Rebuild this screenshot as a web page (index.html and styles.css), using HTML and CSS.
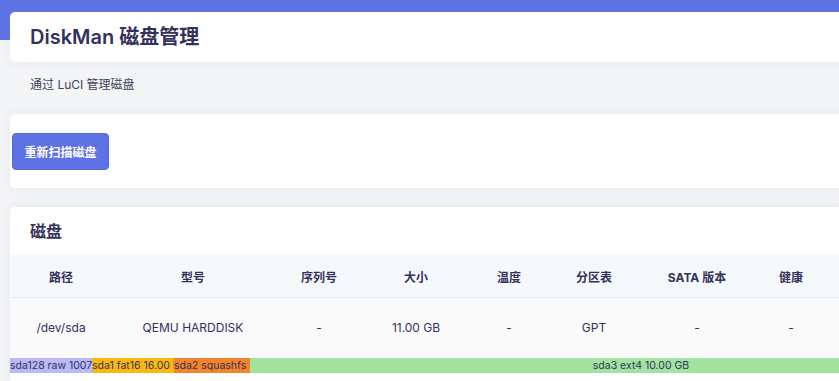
FILE: index.html
```html
<!DOCTYPE html>
<html>
<head>
    <meta charset="UTF-8">
    <title>DiskMan 磁盘管理</title>
    <link rel="stylesheet" href="styles.css">
</head>
<body>
    <div class="main">
        <h2 class="card map-title">DiskMan 磁盘管理</h2>
        <div class="map-descr">通过 LuCI 管理磁盘</div>

        <div class="card actions">
            <button type="button" class="btn-rescan">重新扫描磁盘</button>
        </div>

        <div class="card disks">
            <h3 class="section-title">磁盘</h3>
            <table class="disk-table">
                <colgroup>
                    <col class="c-path">
                    <col class="c-model">
                    <col class="c-serial">
                    <col class="c-size">
                    <col class="c-temp">
                    <col class="c-ptable">
                    <col class="c-sata">
                    <col class="c-health">
                    <col class="c-rest">
                </colgroup>
                <tr class="head">
                    <th>路径</th>
                    <th>型号</th>
                    <th>序列号</th>
                    <th>大小</th>
                    <th>温度</th>
                    <th>分区表</th>
                    <th>SATA 版本</th>
                    <th>健康</th>
                    <th></th>
                </tr>
                <tr class="row">
                    <td>/dev/sda</td>
                    <td>QEMU HARDDISK</td>
                    <td>-</td>
                    <td>11.00 GB</td>
                    <td>-</td>
                    <td>GPT</td>
                    <td>-</td>
                    <td>-</td>
                    <td></td>
                </tr>
            </table>
            <div class="part-bar">
                <div class="part p-raw">sda128 raw 1007.00 KB</div>
                <div class="part p-fat">sda1 fat16 16.00 MB</div>
                <div class="part p-squash">sda2 squashfs 104.00 MB</div>
                <div class="part p-ext">sda3 ext4 10.00 GB</div>
            </div>
        </div>
    </div>
</body>
</html>
```

FILE: styles.css
```css
html, body {
    overflow: hidden;
}
body {
    margin: 0;
    background: linear-gradient(#5e72e4 0, #5e72e4 40px, #f4f5f7 40px);
    font-family: Inter, "Noto Sans CJK SC", sans-serif;
    color: #32325d;
}
.main {
    width: 1022px;
    padding: 12px 0 0 10px;
}
.card {
    background-color: #FFFFFF;
    border-radius: 5px;
    box-shadow: 0 0 12px rgba(136, 152, 170, 0.15);
}
.map-title {
    margin: 0;
    height: 50px;
    line-height: 50px;
    padding-left: 20px;
    font-size: 20px;
    font-weight: 600;
    color: #32325d;
}
.map-descr {
    padding: 14px 20px 20px;
    line-height: 18px;
    font-size: 12px;
    color: #3c4257;
}
.actions {
    padding: 19px 2px 18px;
}
.btn-rescan {
    display: block;
    height: 37px;
    width: 97px;
    padding: 0;
    background-color: #5e72e4;
    border: 1px solid #5468dc;
    border-radius: 4px;
    color: #FFFFFF;
    font-family: Inter, "Noto Sans CJK SC", sans-serif;
    font-size: 12px;
    font-weight: 600;
}
.disks {
    margin-top: 19px;
    padding-bottom: 10px;
}
.section-title {
    margin: 0;
    height: 48px;
    line-height: 48px;
    padding-left: 20px;
    font-size: 16px;
    font-weight: 700;
}
.disk-table {
    width: 1022px;
    table-layout: fixed;
    border-collapse: collapse;
    font-size: 12px;
}
.c-path { width: 102px; }
.c-model { width: 162px; }
.c-serial { width: 90px; }
.c-size { width: 104px; }
.c-temp { width: 82px; }
.c-ptable { width: 88px; }
.c-sata { width: 118px; }
.c-health { width: 70px; }
.c-rest { width: 206px; }
.disk-table th {
    height: 42px;
    padding: 0;
    background-color: #f6f9fc;
    border-bottom: 1px solid #e9ecef;
    font-weight: 700;
    text-align: center;
}
.disk-table td {
    height: 59px;
    padding: 0;
    background-color: #fafafa;
    text-align: center;
}
.part-bar {
    display: flex;
    margin-top: 1px;
    height: 15px;
    line-height: 15px;
    font-size: 10.5px;
    color: #32325d;
}
.part {
    overflow: hidden;
    white-space: nowrap;
    text-align: center;
}
.p-raw { width: 82px; background-color: #b9b9f7; }
.p-fat { width: 82px; background-color: #fcb90d; }
.p-squash { width: 76px; background-color: #f2852b; }
.p-ext { width: 782px; background-color: #a2e3a0; }
```
